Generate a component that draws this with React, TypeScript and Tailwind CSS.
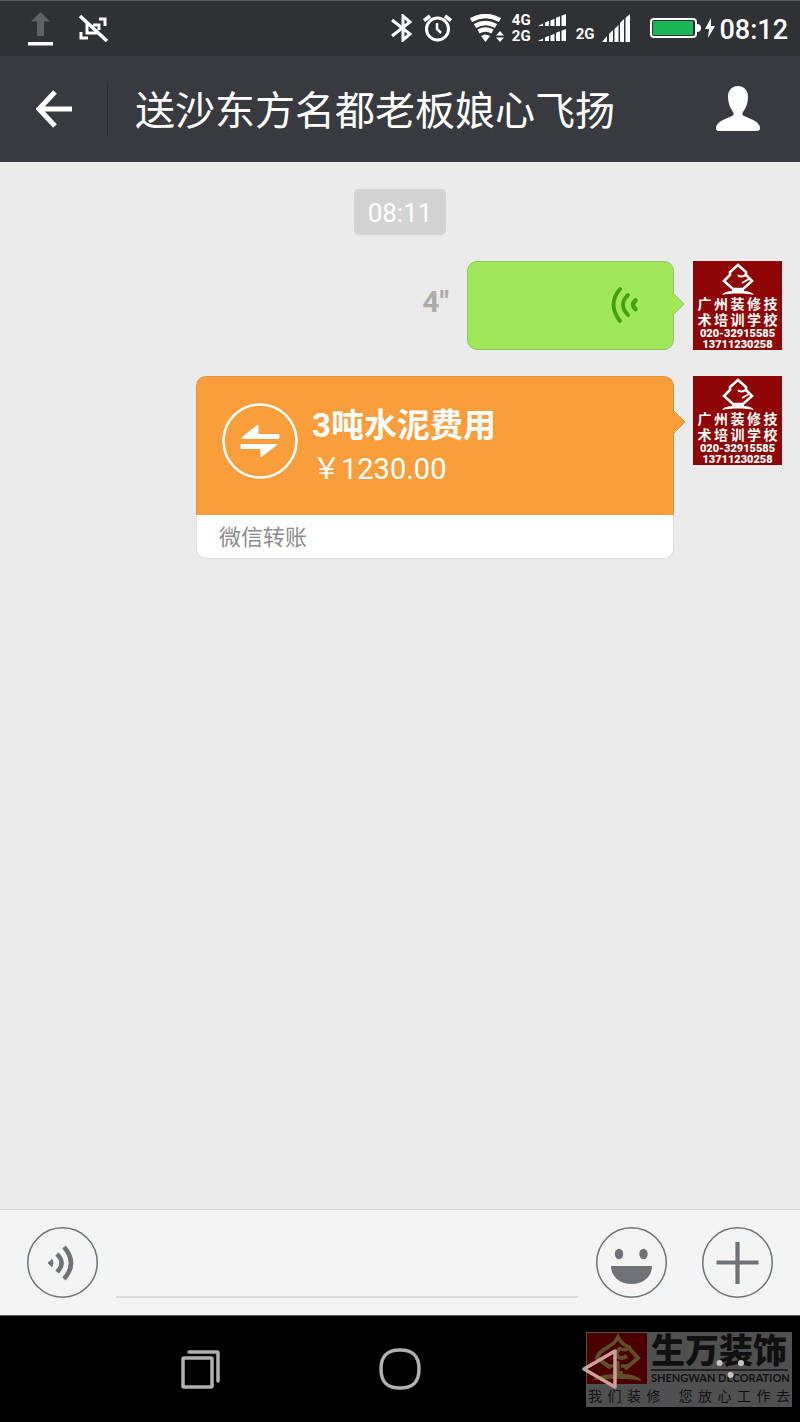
import React from 'react'

interface SignalProps {
  className: string
}

interface MessageRowProps {
  children: React.ReactNode
}

interface BubbleTailProps {
  className: string
  fill: string
  stroke: string
}

const App: React.FC = () => {
  return (
    <div className="flex min-h-screen flex-col bg-[#ebebeb] font-[Roboto,'Noto_Sans_CJK_SC',sans-serif]">
      <StatusBar />
      <ChatHeader />
      <main className="flex flex-1 flex-col gap-[26px] pt-[27px] pr-[18px]">
        <time className="ml-[18px] flex h-[46px] items-center self-center rounded-[5px] bg-[#d3d3d3] px-[14px] pt-[2px] text-[26px] text-white">
          08:11
        </time>
        <MessageRow>
          <VoiceMessage />
        </MessageRow>
        <MessageRow>
          <TransferMessage />
        </MessageRow>
      </main>
      <InputBar />
      <NavigationBar />
    </div>
  )
}

export default App

const StatusBar: React.FC = () => {
  return (
    <div className="flex h-14 items-center border-t border-[#54565a] bg-[#303135] pr-3 pl-7 text-white">
      <UploadIcon />
      <ScreenshotOffIcon />
      <div className="ml-auto flex items-center pb-[2px]">
        <BluetoothIcon />
        <AlarmIcon />
        <WifiIcon />
        <div className="ml-[7px] flex flex-col font-[Roboto,sans-serif] text-[15px] leading-4 font-bold">
          <span>4G</span>
          <span>2G</span>
        </div>
        <div className="ml-[7px] flex flex-col gap-[3px]">
          <SignalBars className="h-3 w-7" />
          <SignalBars className="h-3 w-7" />
        </div>
        <span className="ml-[10px] pt-3 text-[15px] leading-4 font-bold">2G</span>
        <SignalBars className="ml-2 h-7 w-7" />
        <BatteryIcon />
        <BoltIcon />
        <span className="ml-1 pt-[4px] text-[27px] leading-8 font-medium">08:12</span>
      </div>
    </div>
  )
}

const ChatHeader: React.FC = () => {
  return (
    <header className="flex h-[106px] items-center bg-[#393a3f] pr-[38px] pl-9 text-white">
      <button type="button" aria-label="返回">
        <svg className="h-10 w-[38px]" viewBox="0 0 38 40" fill="none" stroke="currentColor" strokeWidth="5">
          <path d="M19 3 3 20l16 17M3 20h33" />
        </svg>
      </button>
      <div className="ml-[33px] h-[54px] w-px bg-[#2c2d31]" />
      <h1 className="ml-[27px] flex-1 truncate pt-[6px] text-[40px] leading-[56px]">送沙东方名都老板娘心飞扬</h1>
      <button type="button" aria-label="聊天信息">
        <svg className="h-[46px] w-[48px]" viewBox="0 0 48 46" fill="currentColor">
          <path d="M24 0c6 0 10 4 10 11 0 6-2 11-5 15-1 2-1 3 1 4 4 2 8 3 11 5 3 2 5 4 5 7 0 2-1 3-3 3H5c-2 0-3-1-3-3 0-3 2-5 5-7 3-2 7-3 11-5 2-1 2-2 1-4-3-4-5-9-5-15C14 4 18 0 24 0Z" />
        </svg>
      </button>
    </header>
  )
}

const MessageRow: React.FC<MessageRowProps> = ({ children }) => {
  return (
    <div className="flex items-start justify-end gap-[19px]">
      {children}
      <Avatar />
    </div>
  )
}

const VoiceMessage: React.FC = () => {
  return (
    <div className="flex items-center gap-[18px]">
      <span className="pb-2 text-[30px] leading-9 font-bold text-[#ababab]">4"</span>
      <button
        type="button"
        aria-label="播放语音"
        className="relative flex h-[89px] w-[207px] items-center justify-end rounded-[10px] border border-[#8fc95a] bg-[#a0e75a] pr-[33px]"
      >
        <svg
          className="h-[38px] w-[30px]"
          viewBox="0 0 30 38"
          fill="none"
          stroke="#43a10f"
          strokeWidth="3.800"
          strokeLinecap="round"
        >
          <path d="M10 2Q-3 17.500 10 34M18 8q-10 9.500 0 20" />
          <path d="M25.500 13.500q-5 4.500 0 8.500" strokeWidth="4.500" />
        </svg>
        <BubbleTail className="absolute top-[30px] -right-3 h-6 w-[13px]" fill="#a0e75a" stroke="#8fc95a" />
      </button>
    </div>
  )
}

const TransferMessage: React.FC = () => {
  return (
    <a href="#transfer" className="relative block w-[478px] rounded-[10px]">
      <div className="flex h-[139px] rounded-t-[10px] border border-b-0 border-[#df9040] bg-[#fa9d3b] pt-[26px] pl-[25px] text-white">
        <svg className="h-[76px] w-[76px]" viewBox="0 0 76 76" fill="none">
          <circle cx="38" cy="38" r="36.500" stroke="currentColor" strokeWidth="2.600" />
          <path
            d="M20 34.500 36 22v9.500h21v4H20ZM19 41.500h36L39 54v-8.500H19Z"
            fill="currentColor"
            stroke="currentColor"
            strokeLinejoin="round"
          />
        </svg>
        <div className="ml-[14px]">
          <div className="text-[33px] leading-[46px] font-bold">3吨水泥费用</div>
          <div className="text-[29px] leading-10">￥1230.00</div>
        </div>
      </div>
      <div className="flex h-11 items-center rounded-b-[10px] border border-t-0 border-[#dedede] bg-white pt-[2px] pl-[22px] text-[22px] text-[#8c8c8c]">
        微信转账
      </div>
      <BubbleTail className="absolute top-[34px] -right-3 h-6 w-[13px]" fill="#fa9d3b" stroke="#df9040" />
    </a>
  )
}

// Little arrow that points from a bubble to its sender
const BubbleTail: React.FC<BubbleTailProps> = ({ className, fill, stroke }) => {
  return (
    <svg className={className} viewBox="0 0 13 24">
      <path d="M0 1 12 12 0 23Z" fill={fill} />
      <path d="M1 1 12 12 1 23" fill="none" stroke={stroke} />
    </svg>
  )
}

const Avatar: React.FC = () => {
  return (
    <div className="flex h-[89px] w-[89px] flex-col items-center overflow-hidden bg-[#8f0507] text-white">
      <svg className="mt-[2px] h-[33px] w-[34px] shrink-0" viewBox="0 0 34 33" fill="none" stroke="currentColor">
        <path d="m17 2 8 7v3l6 6-9 8H12L3 18l6-6V9Z" strokeWidth="2.600" />
        <path d="M17 12q2 3 8 0M21 20l7-4" strokeWidth="2" />
        <path d="M11 26h12v2c4 0 8 1 10 4-8-2-24-2-32 0 2-3 6-4 10-4Z" fill="currentColor" stroke="none" />
      </svg>
      <div className="w-20 text-[14px] leading-4 font-bold [text-align-last:justify]">广州装修技</div>
      <div className="w-20 text-[14px] leading-4 font-bold [text-align-last:justify]">术培训学校</div>
      <div className="text-[11px] leading-[11px] font-black">020-32915585</div>
      <div className="text-[11px] leading-[11px] font-black">13711230258</div>
    </div>
  )
}

const InputBar: React.FC = () => {
  return (
    <form className="flex h-[106px] items-center border-t border-[#d6d6d6] bg-[#f4f4f4] px-[27px] text-[#6f7276]">
      <button type="button" aria-label="语音输入" className="shrink-0">
        <svg className="h-[71px] w-[71px]" viewBox="0 0 71 71" fill="none" stroke="currentColor">
          <circle cx="35.500" cy="35.500" r="34.750" strokeWidth="1.500" />
          <path d="m21 36 4-3.500q2 3.500 0 7Z" fill="currentColor" />
          <path d="M30 27q9 9 0 18M37 20q14 16 0 32" strokeWidth="4.500" />
        </svg>
      </button>
      <input
        type="text"
        aria-label="输入消息"
        className="mx-[18px] h-[71px] min-w-0 flex-1 border-b-2 border-[#dadada] bg-transparent text-[32px] text-black outline-none"
      />
      <button type="button" aria-label="表情" className="shrink-0">
        <svg className="h-[71px] w-[71px]" viewBox="0 0 71 71" fill="currentColor">
          <circle cx="35.500" cy="35.500" r="34.750" fill="none" stroke="currentColor" strokeWidth="1.500" />
          <ellipse cx="23" cy="27" rx="4.200" ry="5.300" />
          <ellipse cx="47.500" cy="27" rx="4.200" ry="5.300" />
          <path d="M15 39h41c0 10-8 18-20.500 18S15 49 15 39Z" />
        </svg>
      </button>
      <button type="button" aria-label="更多" className="ml-[35px] shrink-0">
        <svg className="h-[71px] w-[71px]" viewBox="0 0 71 71" fill="none" stroke="currentColor">
          <circle cx="35.500" cy="35.500" r="34.750" strokeWidth="1.500" />
          <path d="M35.500 15v42M14.500 35.500h42" strokeWidth="4.200" />
        </svg>
      </button>
    </form>
  )
}

const NavigationBar: React.FC = () => {
  return (
    <nav className="relative flex h-[107px] items-center border-t border-[#55585a] bg-black pl-[12.5%] text-[#b0b0b0]">
      <Watermark />
      <button type="button" aria-label="最近任务" className="relative flex w-[28.57%] justify-center">
        <svg className="h-10 w-10" viewBox="0 0 40 40" fill="none" stroke="currentColor" strokeWidth="3.500">
          <rect x="3" y="9" width="29" height="29" rx="1" />
          <path d="M9 3h28q1 0 1 1v28" strokeLinecap="round" />
        </svg>
      </button>
      <button type="button" aria-label="主页" className="relative flex w-[28.57%] justify-center">
        <svg className="h-[42px] w-[42px]" viewBox="0 0 42 42" fill="none" stroke="currentColor" strokeWidth="3.500">
          <path d="M21 2c13 0 19 6 19 19s-6 19-19 19S2 34 2 21 8 2 21 2Z" />
        </svg>
      </button>
      <button type="button" aria-label="后退" className="relative flex w-[28.57%] justify-center">
        <svg className="h-[42px] w-[38px]" viewBox="0 0 38 42" fill="none">
          <defs>
            <linearGradient id="back-stroke">
              <stop offset="0" stopColor="#b0b0b0" />
              <stop offset="0.150" stopColor="#cfa0a0" />
              <stop offset="1" stopColor="#cf9c9c" />
            </linearGradient>
          </defs>
          <path d="M3 21 34 3v36Z" stroke="url(#back-stroke)" strokeWidth="3.500" strokeLinejoin="round" />
        </svg>
      </button>
      <button type="button" aria-label="菜单" className="relative ml-[16px]">
        <svg className="h-5 w-7" viewBox="0 0 28 20" fill="#c4c4c4">
          <circle cx="3.500" cy="4" r="3" />
          <circle cx="25" cy="4" r="3" />
          <circle cx="14.500" cy="16" r="3" />
        </svg>
      </button>
    </nav>
  )
}

const Watermark: React.FC = () => {
  return (
    <div className="absolute right-2 bottom-[15px] flex h-[75px] w-[206px] flex-col bg-[#505050] text-[#101010]">
      <div className="flex gap-1 pt-px pl-px">
        <svg className="h-[51px] w-[60px] bg-[#4b0000]" viewBox="0 0 60 51" fill="none" stroke="#5e4f28">
          <path d="M20 14q8-3 11-10 3 7 11 10-2 4-8 2" strokeWidth="3.500" />
          <path d="M22 14Q12 18 10 25l14 10M42 15l9 10-13 11M30 23q-2-5 4-8M30 23q4 4 10 0" strokeWidth="4" />
          <path d="M20 33h9M34 33h7M31 28v14" strokeWidth="3.500" />
          <path d="M5 47q9-6 21-6v-3h10v3q14 0 19 7-20-4-50-1Z" fill="#5e4f28" stroke="none" />
        </svg>
        <div className="w-[137px]">
          <div className="border-b-2 border-[#222222] text-[34px] leading-9 font-black">生万装饰</div>
          <div className="text-center font-[Lato,sans-serif] text-[11px] leading-[14px] font-bold whitespace-nowrap">
            SHENGWAN DECORATION
          </div>
        </div>
      </div>
      <div className="px-[2px] text-[14px] leading-[23px] [text-align-last:justify]">我们装修&ensp;您放心工作去</div>
    </div>
  )
}

const SignalBars: React.FC<SignalProps> = ({ className }) => {
  return (
    <svg className={className} viewBox="0 0 28 28" preserveAspectRatio="none" fill="currentColor">
      <path d="M0 28 5 22v6ZM7 28v-8l4-4v12ZM12.500 28V15l4-4v17ZM18 28V9l4-4v23ZM23.500 28V4L28 0v28Z" />
    </svg>
  )
}

const UploadIcon: React.FC = () => {
  return (
    <svg className="h-[34px] w-[25px]" viewBox="0 0 25 34">
      <path d="M12.500 0 22 9.500h-6V24H9V9.500H3Z" fill="#606164" />
      <path d="M0 30h25v3.500H0Z" fill="currentColor" />
    </svg>
  )
}

const ScreenshotOffIcon: React.FC = () => {
  return (
    <svg className="ml-[26px] h-7 w-[30px]" viewBox="0 0 30 28" fill="none" stroke="currentColor" strokeWidth="3">
      <path d="m1 1 27 25" strokeWidth="3.500" />
      <path d="M20 4h6v7M2 17v6h7" />
      <path d="M8 8v10h11M14 10h6v5" />
    </svg>
  )
}

const BluetoothIcon: React.FC = () => {
  return (
    <svg className="h-7 w-[22px]" viewBox="0 0 22 28" fill="none" stroke="currentColor" strokeWidth="3">
      <path d="m1 6 18 14-7 6V2l7 6L1 22" />
    </svg>
  )
}

const AlarmIcon: React.FC = () => {
  return (
    <svg className="ml-[10px] h-7 w-[29px]" viewBox="0 0 29 28" fill="none" stroke="currentColor" strokeWidth="3">
      <circle cx="14.500" cy="15" r="11" />
      <path d="M1 6.500 7 2M28 6.500 22 2" strokeWidth="3.500" />
      <path d="M14 9v6l4 4" strokeWidth="2.500" />
    </svg>
  )
}

// Stacked arcs, with the up and down traffic marks beside them
const WifiIcon: React.FC = () => {
  return (
    <svg className="ml-[18px] h-7 w-[35px]" viewBox="0 0 35 28" fill="none">
      <path
        d="M1 6q14.500-8 29 0M5 12q10.500-6 21 0M8.500 17.500q7-4 14 0"
        stroke="currentColor"
        strokeWidth="4.500"
      />
      <path d="M11 22q4.500-3 9 0l-4.500 6ZM26 21.500l4-4.500 4 4.500ZM26 23.500l4 4.500 4-4.500Z" fill="currentColor" />
    </svg>
  )
}

const BatteryIcon: React.FC = () => {
  return (
    <svg className="ml-5 h-5 w-[51px]" viewBox="0 0 51 20">
      <rect x="1" y="1" width="45" height="18" rx="3" fill="none" stroke="currentColor" strokeWidth="2" />
      <rect x="3" y="3" width="40" height="14" fill="#19b557" />
      <path d="M47 6q4 0 4 4t-4 4Z" fill="currentColor" />
    </svg>
  )
}

const BoltIcon: React.FC = () => {
  return (
    <svg className="ml-1 h-5 w-[10px]" viewBox="0 0 10 20" fill="currentColor">
      <path d="M6 0 0 11h4L3 20l7-12H6Z" />
    </svg>
  )
}
